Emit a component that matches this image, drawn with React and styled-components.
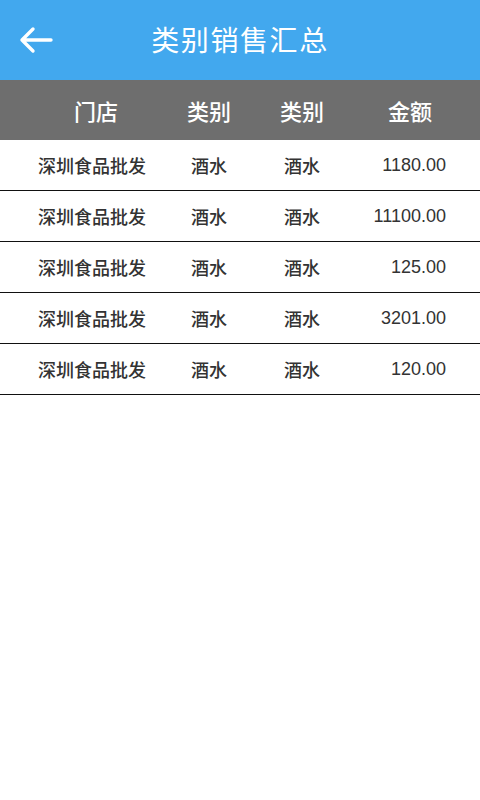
import styled, { createGlobalStyle } from "styled-components";

const GlobalStyle = createGlobalStyle`
  body {
    margin: 0;
    background: #ffffff;
    font-family: "Liberation Sans", "Noto Sans CJK SC", sans-serif;
  }
`;

const Page = styled.div`
  width: 480px;
  min-height: 800px;
  background: #fff;
`;

const TopBar = styled.div`
  height: 80px;
  background: #42a8ee;
  display: flex;
  align-items: center;
  position: relative;
  justify-content: center;
`;

const BackButton = styled.button`
  position: absolute;
  left: 18px;
  top: 24px;
  width: 36px;
  height: 32px;
  padding: 0;
  border: 0;
  background: transparent;
  display: flex;
  align-items: center;
  justify-content: center;
`;

const Title = styled.h1`
  margin: 0 0 2px 0;
  color: #fff;
  font-size: 28px;
  font-weight: 400;
  letter-spacing: 1.6px;
`;

const Row = styled.div`
  display: grid;
  grid-template-columns: 184px 50px 136px 1fr;
  align-items: center;
  height: ${(p) => (p.head ? "60px" : "50px")};
  background: ${(p) => (p.head ? "#6e6e6e" : "#fff")};
  border-bottom: ${(p) => (p.head ? "0" : "1px solid #111")};
`;

const Cell = styled.div`
  text-align: ${(p) => (p.num ? "right" : "center")};
  padding-right: ${(p) => (p.num ? "34px" : p.last ? "30px" : "0")};
  padding-left: ${(p) => (p.first ? "8px" : "0")};
  font-size: ${(p) => (p.head ? "22px" : "18px")};
  color: ${(p) => (p.head ? "#fff" : "#333")};
  font-weight: ${(p) => (p.num ? 400 : 500)};
  white-space: nowrap;
`;

const rows = [
  ["深圳食品批发", "酒水", "酒水", "1180.00"],
  ["深圳食品批发", "酒水", "酒水", "11100.00"],
  ["深圳食品批发", "酒水", "酒水", "125.00"],
  ["深圳食品批发", "酒水", "酒水", "3201.00"],
  ["深圳食品批发", "酒水", "酒水", "120.00"],
];

export default function App() {
  return (
    <Page>
      <GlobalStyle />
      <TopBar>
        <BackButton>
          <svg width="34" height="28" viewBox="0 0 34 28">
            <path
              d="M3 14 H32 M14 3 L3 14 L14 25"
              fill="none"
              stroke="#fff"
              strokeWidth="3.4"
              strokeLinecap="round"
              strokeLinejoin="round"
            />
          </svg>
        </BackButton>
        <Title>类别销售汇总</Title>
      </TopBar>
      <Row head>
        <Cell head first>门店</Cell>
        <Cell head>类别</Cell>
        <Cell head>类别</Cell>
        <Cell head last>金额</Cell>
      </Row>
      {rows.map((r, i) => (
        <Row key={i}>
          <Cell>{r[0]}</Cell>
          <Cell>{r[1]}</Cell>
          <Cell>{r[2]}</Cell>
          <Cell num>{r[3]}</Cell>
        </Row>
      ))}
    </Page>
  );
}
